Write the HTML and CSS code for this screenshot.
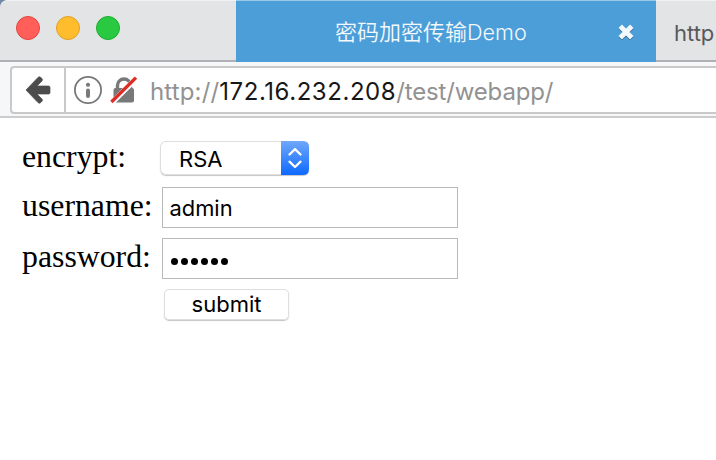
FILE: index.html
```html
<!DOCTYPE html>
<html lang="zh">
<head>
<meta charset="utf-8">
<title>密码加密传输Demo</title>
<link rel="stylesheet" href="styles.css">
</head>
<body>
<div class="desktop">
<header class="tabs">
  <div class="lights"><i class="light red"></i><i class="light amber"></i><i class="light green"></i></div>
  <div class="tab active">
    <span class="tab-title">密码加密传输<span class="latin">Demo</span></span>
    <svg class="close" width="20" height="20" viewBox="0 0 20 20"><path class="close-shade" d="M4.2 5.2l11.6 11.6M15.8 5.2L4.2 16.8"/><path class="close-mark" d="M4.2 4.2l11.6 11.6M15.8 4.2L4.2 15.8"/></svg>
  </div>
  <div class="tab other"><span>http</span></div>
</header>
<nav class="toolbar">
  <div class="location">
    <div class="back"><svg width="26" height="28" viewBox="0 0 26 28"><path d="M1 14L13 1.4Q14.4 .1 15.9 1.5L17 2.6Q18 3.8 17 4.9L12 10H23.5Q25 10 25 11.5V16.5Q25 18 23.5 18H12L17 23.1Q18 24.2 17 25.3L15.8 26.5Q14.4 27.9 13 26.6Z" fill="#4c4c4c" stroke="#4c4c4c" stroke-width=".7"/></svg></div>
    <svg class="info" width="28" height="28" viewBox="0 0 28 28"><circle cx="14" cy="14" r="13.1" fill="none" stroke="#77797b" stroke-width="1.8"/><circle cx="14" cy="8.8" r="2.1" fill="#77797b"/><path d="M14 14.5V20" stroke="#77797b" stroke-width="4" stroke-linecap="round"/></svg>
    <svg class="lock" width="28" height="28" viewBox="0 0 28 28"><path d="M7.5 13V9.5a6.5 6.5 0 0 1 13 0V13" fill="none" stroke="#77797b" stroke-width="3.4"/><rect x="3.5" y="12" width="20.5" height="14.4" rx="2" fill="#77797b"/><path d="M2 26.6L26.6 2.2" stroke="#fff" stroke-width="5.4"/><path d="M1.4 26L26 1.6" stroke="#dc2d27" stroke-width="3.4"/></svg>
    <div class="url"><span class="scheme">http://</span><span class="host">172.16.232.208</span><span class="path">/test/webapp/</span></div>
  </div>
</nav>
<main class="form">
  <div class="row first"><span class="label">encrypt:</span>
    <div class="select"><span>RSA</span><svg width="28" height="34" viewBox="0 0 28 34"><defs><linearGradient id="g" x1="0" y1="0" x2="0" y2="1"><stop offset="0" stop-color="#6fa8fa"/><stop offset="1" stop-color="#0e69fe"/></linearGradient></defs><path d="M0 0H22Q28 0 28 6V28Q28 34 22 34H0Z" fill="url(#g)"/><path d="M8.5 13.5L14 8.2L19.5 13.5M8.5 20.7L14 26L19.5 20.7" fill="none" stroke="#fff" stroke-width="2.3" stroke-linecap="round" stroke-linejoin="round"/></svg></div>
  </div>
  <div class="row second"><span class="label">username:</span><div class="field"><span>admin</span></div></div>
  <div class="row third"><span class="label">password:</span><div class="field dots"><i></i><i></i><i></i><i></i><i></i><i></i></div></div>
  <div class="submit"><span>submit</span></div>
</main>
</div>
</body>
</html>
```
FILE: styles.css
```css
* { box-sizing: border-box; }
body { margin: 0; background: #fff; font-family: Inter, "Noto Sans CJK SC", sans-serif; }
.desktop { width: 716px; height: 460px; overflow: hidden; background: linear-gradient(#7389a8 0 20px, #fff 20px); }
.tabs { display: flex; height: 62px; background: #e3e4e6; border-radius: 8px 0 0 0; box-shadow: inset 0 1px #f0f1f2, inset 0 -2px #b1b1b5; }
.lights { display: flex; gap: 16px; width: 236px; padding: 16px 0 0 16px; }
.light { width: 24px; height: 24px; border-radius: 50%; border: 1px solid; }
.red { background: #ff5f58; border-color: #e2463f; }
.amber { background: #ffbd2e; border-color: #dfa023; }
.green { background: #29ca41; border-color: #1dad2b; }
.tab { display: flex; align-items: center; white-space: nowrap; }
.active { width: 420px; padding: 1px 20px 0 99px; justify-content: space-between; background: #4c9ed9; border-top: 1px solid #9bcae9; color: #f3f8fc; font-size: 22px; }
.tab-title { margin-top: -2px; line-height: 30px; font-family: "Noto Sans CJK SC", sans-serif; font-weight: 350; }
.latin { font-family: Inter, sans-serif; font-weight: 350; font-size: 21.6px; }
.close { fill: none; }
.close-mark { stroke: #f3f8fc; stroke-width: 4.8; }
.close-shade { stroke: #32698f; stroke-width: 4.8; }
.other { padding: 4px 0 0 18px; color: #58595b; font-size: 22px; }
.toolbar { height: 56px; padding: 4px 0 2px 10px; background: #f6f7f9; border-bottom: 2px solid #ccc; }
.location { display: flex; align-items: center; height: 48px; background: #fff; border: 2px solid #c9c9c9; border-right: 0; border-radius: 4px 0 0 4px; }
.back { display: flex; align-items: center; width: 54px; height: 44px; padding-left: 13px; border-right: 2px solid #c9c9c9; }
.info { margin-left: 8px; }
.lock { margin-left: 8px; }
.url { display: flex; margin: 3px 0 0 12px; font-size: 24px; line-height: 30px; white-space: nowrap; }
.scheme, .path { color: #929292; font-weight: 380; }
.scheme { letter-spacing: .15px; }
.path { letter-spacing: -.15px; }
.host { color: #171717; font-weight: 380; letter-spacing: .55px; }
.form { height: 342px; padding: 23px 0 0 22px; background: #fff; color: #000; }
.row { display: flex; align-items: center; }
.first { height: 34px; }
.second { height: 41px; margin-top: 12px; }
.third { height: 41px; margin-top: 10px; }
.label { width: 140px; font: 31.8px/36px "Liberation Serif", serif; }
.second .label, .third .label { margin-top: -4px; }
.first .label { margin-top: -2px; }
.select { display: flex; align-items: center; justify-content: space-between; width: 149px; height: 34px; margin-left: -2px; padding-left: 19px; border-radius: 6px; background: #fff; box-shadow: inset 0 0 0 1px #dedede, 0 1px 1px #c5c5c5; font-size: 22px; }
.select span { padding-top: 2px; }
.field { display: flex; align-items: center; width: 296px; height: 41px; padding: 1px 0 0 6.5px; border: 1px solid #b9b9b9; font-size: 21.9px; }
.dots { gap: 3px; padding: 5px 0 0 8px; }
.dots i { width: 7px; height: 7px; border-radius: 50%; background: #000; }
.submit { display: flex; align-items: center; justify-content: center; width: 125px; height: 31px; margin: 10px 0 0 142px; border-radius: 5px; box-shadow: inset 0 0 0 1px #dedede, 0 1px 1px #c5c5c5; font-size: 22px; }
.submit span { margin-top: -2px; }
```
